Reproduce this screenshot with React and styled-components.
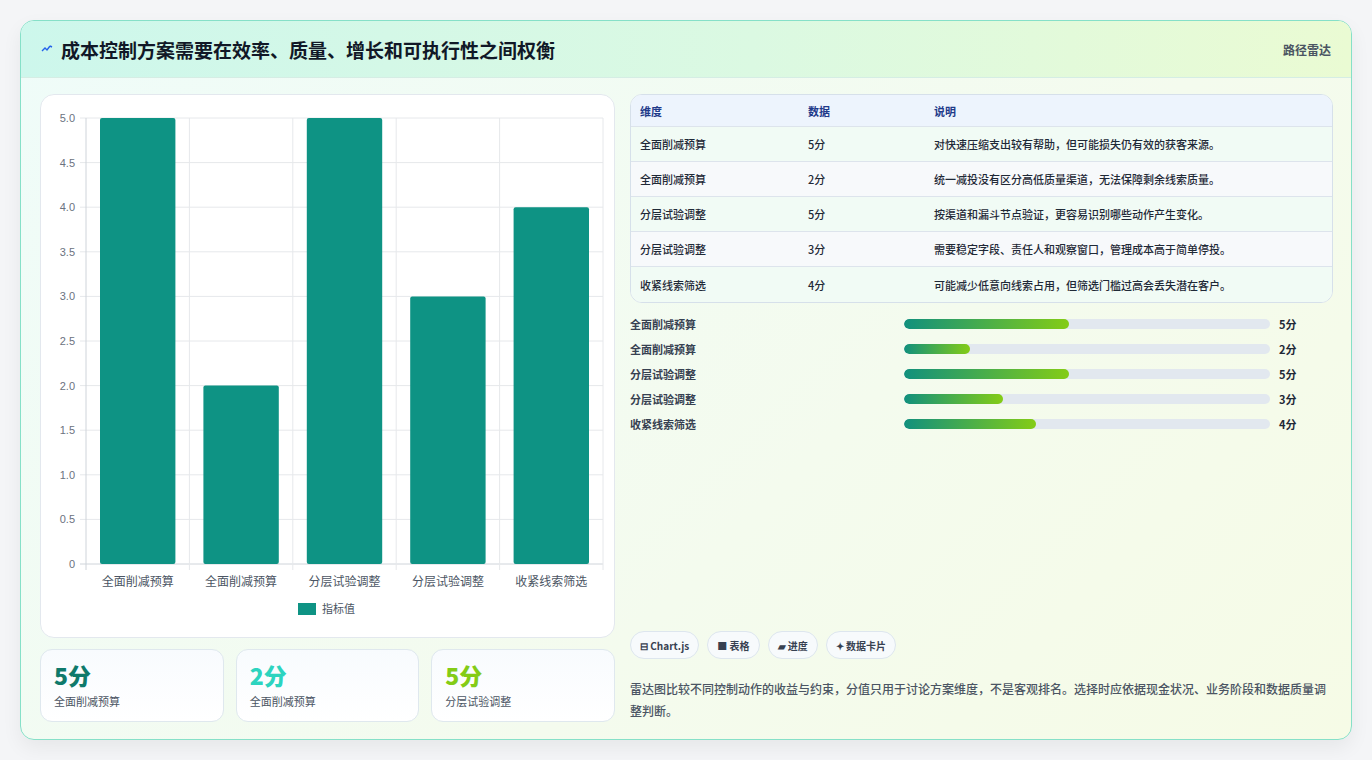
import styled, { createGlobalStyle } from "styled-components";

const Global = createGlobalStyle`
  body {
    margin: 0;
    background: #f4f5f7;
    font-family: "Noto Sans CJK SC", "Noto Sans", sans-serif;
    color: #1f2937;
  }
`;

const Page = styled.div`
  padding: 20px 20px 20px 20px;
  height: 760px;
  box-sizing: border-box;
`;

const Card = styled.div`
  width: 1332px;
  height: 720px;
  box-sizing: border-box;
  border: 1px solid #86e0c8;
  border-radius: 14px;
  background: linear-gradient(135deg, #effcf9 0%, #f4fbee 60%, #f6fbe6 100%);
  box-shadow: 0 8px 20px rgba(0, 0, 0, 0.06);
  overflow: hidden;
  display: flex;
  flex-direction: column;
`;

const Header = styled.div`
  height: 56px;
  flex: none;
  display: flex;
  align-items: center;
  justify-content: space-between;
  padding: 0 20px;
  background: linear-gradient(90deg, #cdf7ec 0%, #dbf9e2 55%, #eafbd3 100%);
  border-bottom: 1px solid #d5ede4;
`;

const Title = styled.h1`
  margin: 0;
  font-size: 19px;
  font-weight: 700;
  color: #111827;
  display: flex;
  align-items: center;
  gap: 8px;
`;

const Tag = styled.span`
  font-size: 12px;
  color: #4b5563;
  font-weight: 600;
`;

const Body = styled.div`
  flex: 1;
  display: grid;
  grid-template-columns: 575px 703px;
  gap: 15px;
  padding: 16px 19px 18px 19px;
`;

const Col = styled.div`
  display: flex;
  flex-direction: column;
  gap: 11px;
  min-height: 0;
`;

const ChartCard = styled.div`
  height: 544px;
  box-sizing: border-box;
  background: #fff;
  border: 1px solid #e3e8ee;
  border-radius: 14px;
  position: relative;
`;

const Stats = styled.div`
  display: grid;
  grid-template-columns: repeat(3, 1fr);
  gap: 12px;
`;

const Stat = styled.div`
  height: 73px;
  box-sizing: border-box;
  border: 1px solid #dfe8ee;
  border-radius: 12px;
  background: linear-gradient(180deg, #f8fbfe, #ffffff);
  padding: 10px 13px;
`;

const StatNum = styled.div`
  font-size: 23px;
  font-weight: 800;
  line-height: 30px;
  color: ${(p) => p.$color};
`;

const StatLabel = styled.div`
  font-size: 11px;
  color: #4b5563;
  margin-top: 3px;
`;

const Table = styled.div`
  border: 1px solid #d6e0ea;
  border-radius: 12px;
  overflow: hidden;
  background: #fff;
`;

const Row = styled.div`
  display: grid;
  grid-template-columns: 168px 126px 1fr;
  padding-left: 9px;
  height: ${(p) => (p.$head ? "32px" : "35px")};
  align-items: center;
  font-size: 11px;
  font-weight: ${(p) => (p.$head ? 700 : 500)};
  color: ${(p) => (p.$head ? "#1e3a8a" : "#1f2937")};
  background: ${(p) => (p.$head ? "#edf4fd" : p.$alt ? "#f7f9fb" : "#f1fbf5")};
  border-bottom: ${(p) => (p.$last ? "none" : "1px solid #dde4ec")};
  box-sizing: border-box;
`;

const Bars = styled.div`
  display: flex;
  flex-direction: column;
  gap: 9px;
  margin-top: 2px;
`;

const BarRow = styled.div`
  display: grid;
  grid-template-columns: 265px 366px 40px;
  gap: 0 9px;
  align-items: center;
  height: 16px;
  font-size: 11px;
  font-weight: 600;
  & > span:first-child { color: #374151; }
`;

const Track = styled.div`
  height: 10px;
  border-radius: 5px;
  background: #e2e8ef;
  overflow: hidden;
`;

const Fill = styled.div`
  height: 100%;
  border-radius: 5px;
  background: linear-gradient(90deg, #11907d, #84cc16);
`;

const Chips = styled.div`
  margin-top: auto;
  display: flex;
  gap: 8px;
`;

const Chip = styled.span`
  height: 28px;
  box-sizing: border-box;
  padding: 0 9px;
  border: 1px solid #dde6ee;
  border-radius: 14px;
  background: #f7fafc;
  display: inline-flex;
  align-items: center;
  gap: 4px;
  font-size: 10px;
  font-weight: 700;
  color: #374151;
`;

const Note = styled.p`
  margin: 8px 0 0;
  font-size: 12px;
  line-height: 22px;
  color: #4b5563;
  font-weight: 500;
`;

const labels = ["全面削减预算", "全面削减预算", "分层试验调整", "分层试验调整", "收紧线索筛选"];
const values = [5, 2, 5, 3, 4];
const notes = [
  "对快速压缩支出较有帮助，但可能损失仍有效的获客来源。",
  "统一减投没有区分高低质量渠道，无法保障剩余线索质量。",
  "按渠道和漏斗节点验证，更容易识别哪些动作产生变化。",
  "需要稳定字段、责任人和观察窗口，管理成本高于简单停投。",
  "可能减少低意向线索占用，但筛选门槛过高会丢失潜在客户。",
];

function BarChart() {
  const x0 = 45, x1 = 562, y0 = 469, y5 = 23;
  const step = (x1 - x0) / 5;
  const ticks = [0, 0.5, 1, 1.5, 2, 2.5, 3, 3.5, 4, 4.5, 5];
  const yy = (v) => y0 - ((y0 - y5) * v) / 5;
  return (
    <svg width="573" height="542" style={{ display: "block" }}>
      {ticks.map((t) => (
        <g key={t}>
          <line x1={x0 - 6} x2={x1} y1={yy(t)} y2={yy(t)} stroke={t === 0 ? "#cfd4da" : "#e6e8eb"} />
          <text x={x0 - 11} y={yy(t) + 4} fontSize="11" fill="#6b7280" textAnchor="end" fontFamily="Liberation Sans, sans-serif">
            {t === 0 ? "0" : t.toFixed(1)}
          </text>
        </g>
      ))}
      {[0, 1, 2, 3, 4, 5].map((i) => (
        <line key={i} x1={x0 + i * step} x2={x0 + i * step} y1={y5} y2={y0 + 6} stroke={i === 0 ? "#cfd4da" : "#e6e8eb"} />
      ))}
      {values.map((v, i) => (
        <rect key={i} x={x0 + i * step + 14} y={yy(v)} width={step - 28} height={y0 - yy(v)} rx="2" fill="#0e9384" />
      ))}
      {labels.map((l, i) => (
        <text key={i} x={x0 + i * step + step / 2} y={y0 + 22} fontSize="12" fill="#4b5563" textAnchor="middle">{l}</text>
      ))}
      <rect x="257" y="508" width="18" height="12" fill="#0e9384" />
      <text x="281" y="518" fontSize="11" fill="#4b5563">指标值</text>
    </svg>
  );
}

export default function App() {
  return (
    <>
      <Global />
      <Page>
        <Card>
          <Header>
            <Title>
              <svg width="12" height="10" viewBox="0 0 12 10"><path d="M1 7 L4 4 L6 6 L9 2 M9 2 L11 3" stroke="#2563eb" strokeWidth="1.4" fill="none" /></svg>
              成本控制方案需要在效率、质量、增长和可执行性之间权衡
            </Title>
            <Tag>路径雷达</Tag>
          </Header>
          <Body>
            <Col>
              <ChartCard><BarChart /></ChartCard>
              <Stats>
                <Stat><StatNum $color="#0f7a6b">5分</StatNum><StatLabel>全面削减预算</StatLabel></Stat>
                <Stat><StatNum $color="#2dd4bf">2分</StatNum><StatLabel>全面削减预算</StatLabel></Stat>
                <Stat><StatNum $color="#84cc16">5分</StatNum><StatLabel>分层试验调整</StatLabel></Stat>
              </Stats>
            </Col>
            <Col>
              <Table>
                <Row $head><span>维度</span><span>数据</span><span>说明</span></Row>
                {labels.map((l, i) => (
                  <Row key={i} $alt={i % 2 === 1} $last={i === 4}>
                    <span>{l}</span><span>{values[i]}分</span><span>{notes[i]}</span>
                  </Row>
                ))}
              </Table>
              <Bars>
                {labels.map((l, i) => (
                  <BarRow key={i}>
                    <span>{l}</span>
                    <Track><Fill style={{ width: `${values[i] * 9}%` }} /></Track>
                    <span>{values[i]}分</span>
                  </BarRow>
                ))}
              </Bars>
              <Chips>
                <Chip>⊟ Chart.js</Chip>
                <Chip>■ 表格</Chip>
                <Chip>▰ 进度</Chip>
                <Chip>✦ 数据卡片</Chip>
              </Chips>
              <Note>雷达图比较不同控制动作的收益与约束，分值只用于讨论方案维度，不是客观排名。选择时应依据现金状况、业务阶段和数据质量调整判断。</Note>
            </Col>
          </Body>
        </Card>
      </Page>
    </>
  );
}
